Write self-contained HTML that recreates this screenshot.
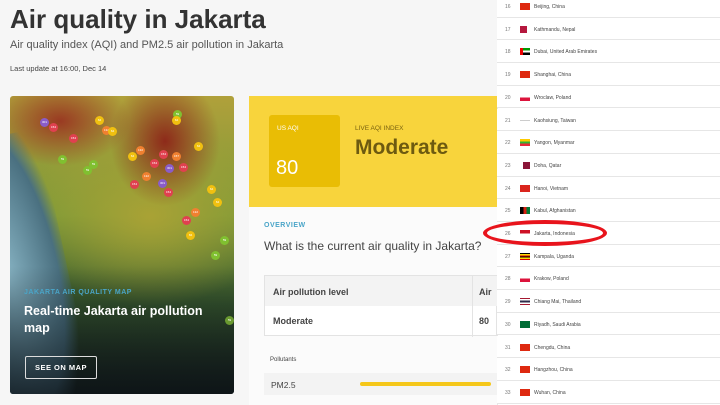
<!DOCTYPE html>
<html><head><meta charset="utf-8"><style>
*{margin:0;padding:0;box-sizing:border-box}
body{width:720px;height:405px;overflow:hidden;background:#f6f6f6;font-family:"Liberation Sans",sans-serif;position:relative;color:#333}
.a{position:absolute}
.row{position:absolute;left:497px;width:223px;height:22.7px;border-bottom:1px solid #e6e6e6;font-size:5px;color:#444;background:#fff}
.row .n{position:absolute;left:8px;top:9px;color:#777}
.row .f{position:absolute;left:23px;top:8px;width:10px;height:7px}
.row .t{position:absolute;left:37px;top:9px}
.dot{position:absolute;width:9px;height:9px;border-radius:50%;font-size:3px;color:#fff;text-align:center;line-height:9px}
</style></head><body>
<div class="a" style="left:10px;top:4px;font-size:26px;font-weight:bold;color:#333">Air quality in Jakarta</div>
<div class="a" style="left:10px;top:39px;font-size:11px;color:#555">Air quality index (AQI) and PM2.5 air pollution in Jakarta</div>
<div class="a" style="left:10px;top:64px;font-size:7.5px;color:#444">Last update at 16:00, Dec 14</div>

<div class="a" style="left:10px;top:96px;width:224px;height:298px;border-radius:3px;overflow:hidden;background:
radial-gradient(ellipse 55px 65px at 155px 45px,#8e2a1a,transparent),
radial-gradient(ellipse 70px 45px at 50px 25px,#9a3a22,transparent),
radial-gradient(ellipse 130px 90px at 140px 120px,#a9a235,transparent),
linear-gradient(#b0a03a 0%,#7a9a38 40%,#35552d 70%,#1a2622 100%)">
<div class="a" style="left:-50px;top:40px;width:110px;height:300px;background:radial-gradient(ellipse at 45% 45%,#86b2c2,#4a7080 60%,transparent 75%);transform:rotate(-12deg)"></div>
<div class="a" style="left:0;top:170px;width:224px;height:128px;background:linear-gradient(transparent,rgba(10,15,20,.75))"></div>
<div class="dot" style="left:30px;top:22px;background:#8a5cc8">301</div>
<div class="dot" style="left:39px;top:27px;background:#e0404f">154</div>
<div class="dot" style="left:59px;top:38px;background:#e0404f">154</div>
<div class="dot" style="left:85px;top:20px;background:#f0c010">64</div>
<div class="dot" style="left:92px;top:30px;background:#f08030">132</div>
<div class="dot" style="left:98px;top:31px;background:#f0c010">64</div>
<div class="dot" style="left:48px;top:59px;background:#80c030">59</div>
<div class="dot" style="left:79px;top:64px;background:#80c030">59</div>
<div class="dot" style="left:73px;top:70px;background:#80c030">59</div>
<div class="dot" style="left:163px;top:14px;background:#80c030">59</div>
<div class="dot" style="left:162px;top:20px;background:#f0c010">64</div>
<div class="dot" style="left:118px;top:56px;background:#f0c010">64</div>
<div class="dot" style="left:126px;top:50px;background:#f08030">132</div>
<div class="dot" style="left:149px;top:54px;background:#e0404f">154</div>
<div class="dot" style="left:140px;top:63px;background:#e0404f">154</div>
<div class="dot" style="left:162px;top:56px;background:#f08030">157</div>
<div class="dot" style="left:155px;top:68px;background:#8a5cc8">301</div>
<div class="dot" style="left:169px;top:67px;background:#e0404f">154</div>
<div class="dot" style="left:184px;top:46px;background:#f0c010">64</div>
<div class="dot" style="left:132px;top:76px;background:#f08030">132</div>
<div class="dot" style="left:120px;top:84px;background:#e0404f">154</div>
<div class="dot" style="left:148px;top:83px;background:#8a5cc8">301</div>
<div class="dot" style="left:154px;top:92px;background:#e0404f">154</div>
<div class="dot" style="left:197px;top:89px;background:#f0c010">64</div>
<div class="dot" style="left:203px;top:102px;background:#f0c010">64</div>
<div class="dot" style="left:181px;top:112px;background:#f08030">132</div>
<div class="dot" style="left:172px;top:120px;background:#e0404f">154</div>
<div class="dot" style="left:176px;top:135px;background:#f0c010">84</div>
<div class="dot" style="left:210px;top:140px;background:#80c030">59</div>
<div class="dot" style="left:201px;top:155px;background:#80c030">59</div>
<div class="dot" style="left:215px;top:220px;background:#6a9a30">59</div>
<div class="a" style="left:14px;top:193px;font-size:7px;font-weight:bold;color:#4aa5c8;letter-spacing:.5px">JAKARTA AIR QUALITY MAP</div>
<div class="a" style="left:14px;top:207px;width:200px;font-size:12.5px;font-weight:bold;color:#fff;line-height:17px">Real-time Jakarta air pollution map</div>
<div class="a" style="left:15px;top:260px;width:72px;height:23px;border:1px solid #ddd;border-radius:2px;color:#fff;font-size:7.5px;font-weight:bold;text-align:center;line-height:21px;letter-spacing:.5px">SEE ON MAP</div>
</div>

<div class="a" style="left:249px;top:96px;width:248px;height:111px;background:#f8d43c"></div>
<div class="a" style="left:269px;top:115px;width:71px;height:72px;background:#e9bd05;border-radius:3px"></div>
<div class="a" style="left:277px;top:125px;font-size:6.5px;color:#fff">US AQI</div>
<div class="a" style="left:276px;top:157px;font-size:20px;color:#fff">80</div>
<div class="a" style="left:355px;top:125px;font-size:6.5px;color:#7a6210">LIVE AQI INDEX</div>
<div class="a" style="left:355px;top:136px;font-size:21px;font-weight:bold;color:#6d5a10">Moderate</div>
<div class="a" style="left:249px;top:207px;width:248px;height:198px;background:#fbfbfb"></div>
<div class="a" style="left:264px;top:222px;font-size:7px;font-weight:bold;color:#4aa5c8;letter-spacing:.5px">OVERVIEW</div>
<div class="a" style="left:264px;top:239px;font-size:12px;color:#444">What is the current air quality in Jakarta?</div>
<div class="a" style="left:264px;top:275px;width:233px;height:61px;border:1px solid #e3e3e3;background:#fff">
<div class="a" style="left:0;top:0;width:233px;height:30px;background:#f3f3f3"></div>
<div class="a" style="left:207px;top:0;width:1px;height:61px;background:#e3e3e3"></div>
<div class="a" style="left:8px;top:11px;font-size:9px;font-weight:bold;color:#444">Air pollution level</div>
<div class="a" style="left:214px;top:11px;font-size:9px;font-weight:bold;color:#444">Air</div>
<div class="a" style="left:8px;top:40px;font-size:9px;font-weight:bold;color:#444">Moderate</div>
<div class="a" style="left:214px;top:40px;font-size:9px;font-weight:bold;color:#444">80</div>
</div>
<div class="a" style="left:270px;top:357px;font-size:6px;color:#444">Pollutants</div>
<div class="a" style="left:264px;top:373px;width:233px;height:22px;background:#f3f3f3"></div>
<div class="a" style="left:271px;top:380px;font-size:8.5px;color:#444">PM2.5</div>
<div class="a" style="left:360px;top:382px;width:131px;height:4px;background:#f5c71a;border-radius:2px"></div>

<div class="a" style="left:497px;top:0;width:223px;height:405px;background:#fff;border-left:1px solid #e6e6e6"></div>
<div class="row" style="top:-5px"><span class="n">16</span><span class="f" style="background:#de2910"></span><span class="t">Beijing, China</span></div>
<div class="row" style="top:17.7px"><span class="n">17</span><span class="f" style="background:#b5183e;width:7px"></span><span class="t">Kathmandu, Nepal</span></div>
<div class="row" style="top:40.4px"><span class="n">18</span><span class="f" style="background:linear-gradient(90deg,#e00 30%,transparent 30%),linear-gradient(#090 33%,#fff 33%,#fff 66%,#000 66%)"></span><span class="t">Dubai, United Arab Emirates</span></div>
<div class="row" style="top:63.1px"><span class="n">19</span><span class="f" style="background:#de2910"></span><span class="t">Shanghai, China</span></div>
<div class="row" style="top:85.8px"><span class="n">20</span><span class="f" style="background:linear-gradient(#fff 50%,#dc143c 50%)"></span><span class="t">Wroclaw, Poland</span></div>
<div class="row" style="top:108.5px"><span class="n">21</span><span class="f" style="background:linear-gradient(transparent 45%,#ccc 45%,#ccc 55%,transparent 55%)"></span><span class="t">Kaohsiung, Taiwan</span></div>
<div class="row" style="top:131.2px"><span class="n">22</span><span class="f" style="background:linear-gradient(#fecb00 33%,#34b233 33%,#34b233 66%,#ea2839 66%)"></span><span class="t">Yangon, Myanmar</span></div>
<div class="row" style="top:153.9px"><span class="n">23</span><span class="f" style="background:#8a1538;left:26px;width:7px"></span><span class="t">Doha, Qatar</span></div>
<div class="row" style="top:176.6px"><span class="n">24</span><span class="f" style="background:#da251d"></span><span class="t">Hanoi, Vietnam</span></div>
<div class="row" style="top:199.3px"><span class="n">25</span><span class="f" style="background:linear-gradient(90deg,#000 33%,#d32011 33%,#d32011 66%,#007a36 66%)"></span><span class="t">Kabul, Afghanistan</span></div>
<div class="row" style="top:222px"><span class="n">26</span><span class="f" style="background:linear-gradient(#ce1126 50%,#fff 50%)"></span><span class="t">Jakarta, Indonesia</span></div>
<div class="row" style="top:244.7px"><span class="n">27</span><span class="f" style="background:linear-gradient(#000 17%,#fcdc04 17%,#fcdc04 33%,#d90000 33%,#d90000 50%,#000 50%,#000 67%,#fcdc04 67%,#fcdc04 83%,#d90000 83%)"></span><span class="t">Kampala, Uganda</span></div>
<div class="row" style="top:267.4px"><span class="n">28</span><span class="f" style="background:linear-gradient(#fff 50%,#dc143c 50%)"></span><span class="t">Krakow, Poland</span></div>
<div class="row" style="top:290.1px"><span class="n">29</span><span class="f" style="background:linear-gradient(#a51931 17%,#fff 17%,#fff 33%,#2d2a4a 33%,#2d2a4a 67%,#fff 67%,#fff 83%,#a51931 83%)"></span><span class="t">Chiang Mai, Thailand</span></div>
<div class="row" style="top:312.8px"><span class="n">30</span><span class="f" style="background:#006c35"></span><span class="t">Riyadh, Saudi Arabia</span></div>
<div class="row" style="top:335.5px"><span class="n">31</span><span class="f" style="background:#de2910"></span><span class="t">Chengdu, China</span></div>
<div class="row" style="top:358.2px"><span class="n">32</span><span class="f" style="background:#de2910"></span><span class="t">Hangzhou, China</span></div>
<div class="row" style="top:380.9px"><span class="n">33</span><span class="f" style="background:#de2910"></span><span class="t">Wuhan, China</span></div>

<div class="a" style="left:483px;top:220px;width:124px;height:26px;border:4px solid #e8141c;border-radius:50%"></div>
</body></html>
